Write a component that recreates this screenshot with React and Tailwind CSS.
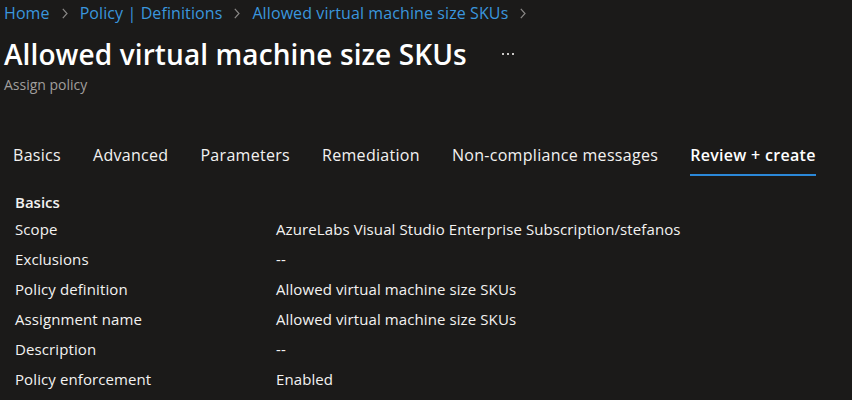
import React from 'react';

const crumbs = ['Home', 'Policy | Definitions', 'Allowed virtual machine size SKUs'];

const tabs = [
    { name: 'Basics' },
    { name: 'Advanced' },
    { name: 'Parameters' },
    { name: 'Remediation' },
    { name: 'Non-compliance messages' },
    { name: 'Review + create', active: true },
];

const rows = [
    ['Scope', 'AzureLabs Visual Studio Enterprise Subscription/stefanos'],
    ['Exclusions', '--'],
    ['Policy definition', 'Allowed virtual machine size SKUs'],
    ['Assignment name', 'Allowed virtual machine size SKUs'],
    ['Description', '--'],
    ['Policy enforcement', 'Enabled'],
];

const Chevron = () => (
    <svg width="6" height="11" viewBox="0 0 6 11" className="shrink-0">
        <path d="M0.8 0.8 L5 5.5 L0.8 10.2" fill="none" stroke="#8a8886" strokeWidth="1.2" />
    </svg>
);

const App = () => {
    return (
        <div className="w-[852px] h-[400px] overflow-hidden bg-[#1b1a19] text-[#f3f2f1] font-['Open_Sans',sans-serif]">
            {/* Breadcrumb */}
            <div className="flex items-center gap-[12px] pl-[4px] h-[26px] text-[16px] text-[#3a96dd] tracking-[0.1px]">
                {crumbs.map(c => (
                    <React.Fragment key={c}>
                        <span>{c}</span>
                        <Chevron />
                    </React.Fragment>
                ))}
            </div>

            {/* Title */}
            <div className="flex items-center h-[34px] mt-[11px] pl-[4px]">
                <h1 className="text-[28px] font-semibold tracking-[0.1px] leading-none text-white">
                    Allowed virtual machine size SKUs
                </h1>
                <div className="flex items-center gap-[3px] ml-[35px]">
                    <span className="w-[2px] h-[2px] bg-[#c8c6c4]" />
                    <span className="w-[2px] h-[2px] bg-[#c8c6c4]" />
                    <span className="w-[2px] h-[2px] bg-[#c8c6c4]" />
                </div>
            </div>
            <div className="pl-[4px] h-[22px] flex items-center mt-[2px] text-[14px] text-[#a19f9d]">Assign policy</div>

            {/* Tabs */}
            <div className="flex items-end gap-[32px] pl-[13px] mt-[40px]">
                {tabs.map(t => (
                    <div
                        key={t.name}
                        className={`h-[41px] flex items-center text-[16px] tracking-[0.3px] border-b-2 ${
                            t.active ? 'font-semibold border-[#2b88d8] text-white' : 'border-transparent text-[#f3f2f1]'
                        }`}
                    >
                        {t.name}
                    </div>
                ))}
            </div>

            {/* Summary */}
            <div className="pl-[15px] mt-[14px]">
                <div className="h-[24px] flex items-center text-[15px] font-semibold">Basics</div>
                {rows.map(([label, value]) => (
                    <div key={label} className="flex items-center h-[30px] text-[15px] tracking-[0.1px]">
                        <span className="w-[261px] shrink-0">{label}</span>
                        <span>{value}</span>
                    </div>
                ))}
            </div>
        </div>
    );
};

export default App;
